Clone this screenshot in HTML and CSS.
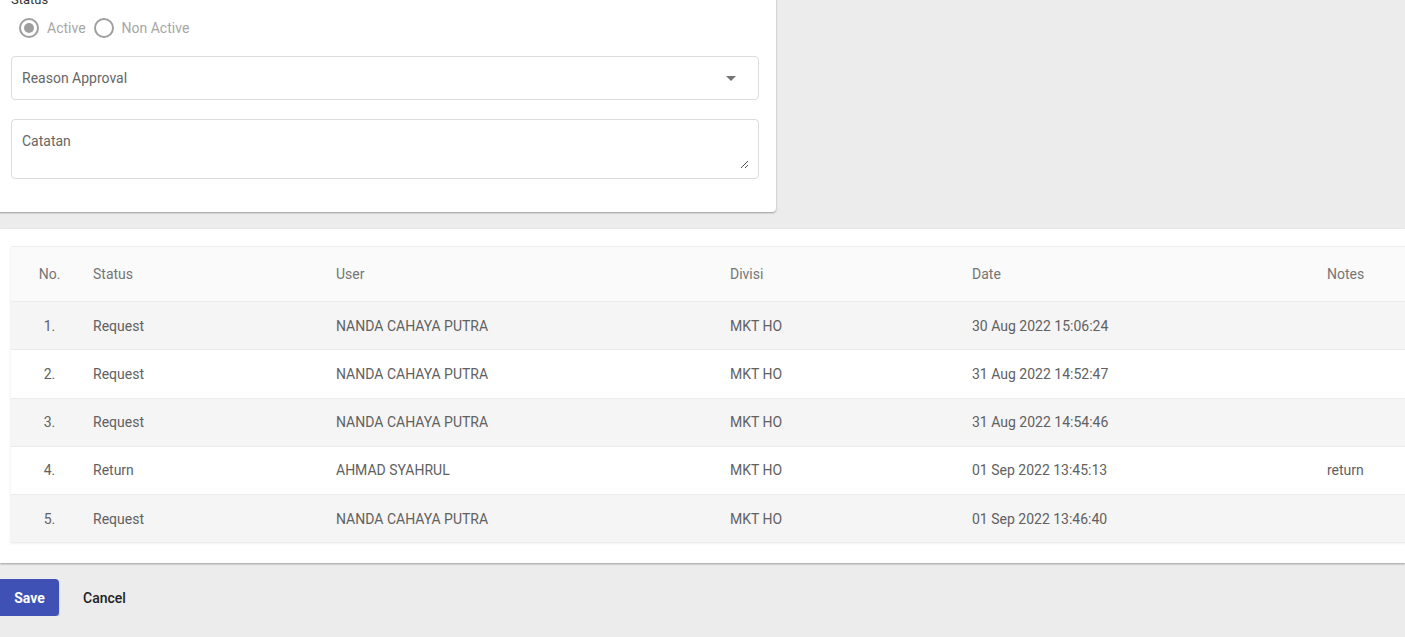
FILE: index.html
```html
<!DOCTYPE html>
<html>
<head>
<meta charset="utf-8">
<link rel="stylesheet" href="styles.css">
</head>
<body>
<div class="card">
  <div class="status-label">Status</div>
  <div class="radios">
    <label class="radio"><span class="circle checked"></span><span>Active</span></label>
    <label class="radio"><span class="circle"></span><span>Non Active</span></label>
  </div>
  <div class="select">
    <span>Reason Approval</span>
    <span class="arrow"></span>
  </div>
  <div class="textarea">
    <span>Catatan</span>
    <svg class="grip" width="9" height="9" viewBox="0 0 9 9"><path d="M8 1 L1 8 M8 5 L5 8" stroke="#555" stroke-width="1" fill="none"/></svg>
  </div>
</div>

<div class="section">
  <table class="history">
    <colgroup>
      <col style="width:82px"><col style="width:243px"><col style="width:394px"><col style="width:242px"><col style="width:355px"><col style="width:120px">
    </colgroup>
    <thead>
      <tr><th class="no">No.</th><th>Status</th><th>User</th><th>Divisi</th><th>Date</th><th>Notes</th></tr>
    </thead>
    <tbody>
      <tr><td class="no">1.</td><td>Request</td><td>NANDA CAHAYA PUTRA</td><td>MKT HO</td><td>30 Aug 2022 15:06:24</td><td></td></tr>
      <tr><td class="no">2.</td><td>Request</td><td>NANDA CAHAYA PUTRA</td><td>MKT HO</td><td>31 Aug 2022 14:52:47</td><td></td></tr>
      <tr><td class="no">3.</td><td>Request</td><td>NANDA CAHAYA PUTRA</td><td>MKT HO</td><td>31 Aug 2022 14:54:46</td><td></td></tr>
      <tr><td class="no">4.</td><td>Return</td><td>AHMAD SYAHRUL</td><td>MKT HO</td><td>01 Sep 2022 13:45:13</td><td>return</td></tr>
      <tr><td class="no">5.</td><td>Request</td><td>NANDA CAHAYA PUTRA</td><td>MKT HO</td><td>01 Sep 2022 13:46:40</td><td></td></tr>
    </tbody>
  </table>
</div>

<div class="actions">
  <button class="btn-save">Save</button>
  <button class="btn-cancel">Cancel</button>
</div>
</body>
</html>
```

FILE: styles.css
```css
html, body {
  margin: 0;
  padding: 0;
  background: #ececec;
  font-family: Roboto, "Liberation Sans", sans-serif;
  font-size: 14px;
  overflow: hidden;
}

.card {
  background: #fff;
  margin-left: -5px;
  margin-top: -7px;
  padding: 0 17px 33px 16px;
  border-radius: 0 0 4px 4px;
  box-shadow: 0 1px 2px rgba(0,0,0,0.35);
  box-sizing: content-box;
  width: 748px;
}

.status-label {
  color: #333;
  font-size: 13px;
  line-height: 14px;
  height: 14px;
}

.radios {
  display: flex;
  gap: 8px;
  padding-left: 8px;
  height: 32px;
  align-items: center;
  margin-top: 5px;
  margin-bottom: 12px;
}

.radio {
  display: flex;
  align-items: center;
  gap: 8px;
  color: #a6a6a6;
  font-size: 14px;
}

.circle {
  width: 16px;
  height: 16px;
  border: 2px solid #9e9e9e;
  border-radius: 50%;
  position: relative;
  box-sizing: content-box;
}

.circle.checked::after {
  content: "";
  position: absolute;
  left: 3px;
  top: 3px;
  width: 10px;
  height: 10px;
  border-radius: 50%;
  background: #9e9e9e;
}

.select {
  height: 42px;
  border: 1px solid #dcdcdc;
  border-radius: 4px;
  display: flex;
  align-items: center;
  justify-content: space-between;
  padding: 0 22px 0 10px;
  color: #666;
  margin-bottom: 19px;
}

.arrow {
  width: 0;
  height: 0;
  border-left: 5px solid transparent;
  border-right: 5px solid transparent;
  border-top: 5px solid #757575;
}

.textarea {
  border: 1px solid #dcdcdc;
  border-radius: 4px;
  padding: 13px 10px 0;
  box-sizing: border-box;
  height: 60px;
  color: #666;
  position: relative;
}

.grip {
  position: absolute;
  right: 9px;
  bottom: 9px;
}

.section {
  background: #fff;
  margin-top: 17px;
  padding: 17px 0 20px 11px;
  overflow: hidden;
  box-shadow: 0 1px 2px rgba(0,0,0,0.35);
}

.history {
  border-collapse: collapse;
  table-layout: fixed;
  width: 1436px;
  border-top: 1px solid #eeeeee;
  box-shadow: -1px 1px 2px rgba(0,0,0,0.06);
}

.history th {
  background: #fafafa;
  height: 54px;
  font-weight: 400;
  color: #757575;
  text-align: left;
  padding: 0;
  border-bottom: 1px solid #ededed;
}

.history td {
  height: 47.25px;
  color: #616161;
  padding: 0;
  border-bottom: 1px solid #ebebeb;
}

.history tbody tr:nth-child(odd) td {
  background: #f5f5f5;
}

.history .no {
  text-align: center;
  padding-right: 5px;
}

.actions {
  display: flex;
  align-items: center;
  gap: 24px;
  margin-top: 16px;
}

.btn-save {
  background: #3f51b5;
  color: #fff;
  border: none;
  border-radius: 0 4px 4px 0;
  height: 37px;
  width: 59px;
  font-family: Roboto, "Liberation Sans", sans-serif;
  font-weight: 700;
  font-size: 14px;
  box-shadow: 0 2px 2px rgba(0,0,0,0.25);
}

.btn-cancel {
  background: none;
  border: none;
  color: #222;
  font-family: Roboto, "Liberation Sans", sans-serif;
  font-weight: 500;
  font-size: 14px;
  padding: 0;
}
```
